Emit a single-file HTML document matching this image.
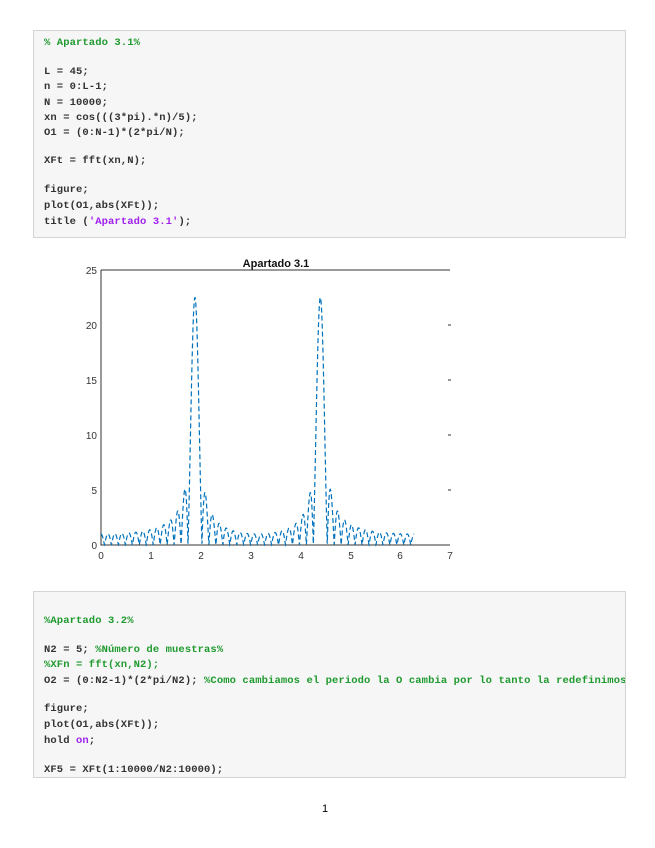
<!DOCTYPE html>
<html><head><meta charset="utf-8"><style>
body{margin:0;width:655px;height:848px;background:#fff;position:relative;overflow:hidden;font-family:"Liberation Mono",monospace}
.box{position:absolute;left:33px;width:591px;background:#f6f6f6;border:1px solid #d4d4d4;overflow:hidden}
.l{position:absolute;left:10px;font-size:10.5px;font-weight:bold;color:#333;white-space:pre;line-height:12px;letter-spacing:0.1px}
.c{color:#1f9a2e}.s{color:#a020f0}
.pn{position:absolute;left:322px;top:803px;font-family:"Liberation Sans",sans-serif;font-size:11px}
svg text{font-family:"Liberation Sans",sans-serif;font-size:10px;fill:#333}
</style></head><body>
<div class="box" style="top:30px;height:206px">
<div class="l c" style="top:6px">% Apartado 3.1%</div>
<div class="l" style="top:35px">L = 45;</div>
<div class="l" style="top:50px">n = 0:L-1;</div>
<div class="l" style="top:66px">N = 10000;</div>
<div class="l" style="top:81px">xn = cos(((3*pi).*n)/5);</div>
<div class="l" style="top:96px">O1 = (0:N-1)*(2*pi/N);</div>
<div class="l" style="top:124px">XFt = fft(xn,N);</div>
<div class="l" style="top:153px">figure;</div>
<div class="l" style="top:169px">plot(O1,abs(XFt));</div>
<div class="l" style="top:185px">title (<span class="s">'Apartado 3.1'</span>);</div>
</div>
<svg style="position:absolute;left:0;top:0" width="655" height="590">
<text x="276" y="267" text-anchor="middle" style="font-weight:bold;font-size:11px;fill:#111">Apartado 3.1</text>
<path d="M101 270H450M101 270V545H450" fill="none" stroke="#333" stroke-width="1"/>
<g stroke="#333"><path d="M448 325h3M448 380h3M448 435h3M448 490h3"/></g>
<g text-anchor="end"><text x="97" y="274">25</text><text x="97" y="329">20</text><text x="97" y="384">15</text><text x="97" y="439">10</text><text x="97" y="494">5</text><text x="97" y="549">0</text></g>
<g text-anchor="middle"><text x="101" y="559">0</text><text x="151" y="559">1</text><text x="201" y="559">2</text><text x="251" y="559">3</text><text x="301" y="559">4</text><text x="351" y="559">5</text><text x="400" y="559">6</text><text x="450" y="559">7</text></g>
<path id="cv" fill="none" stroke="#0072bd" stroke-width="1.2" stroke-dasharray="5 3"/>
</svg>
<div class="box" style="top:591px;height:185px">
<div class="l c" style="top:23px">%Apartado 3.2%</div>
<div class="l" style="top:52px">N2 = 5; <span class="c">%Número de muestras%</span></div>
<div class="l c" style="top:67px">%XFn = fft(xn,N2);</div>
<div class="l" style="top:83px">O2 = (0:N2-1)*(2*pi/N2); <span class="c">%Como cambiamos el periodo la O cambia por lo tanto la redefinimos</span></div>
<div class="l" style="top:111px">figure;</div>
<div class="l" style="top:127px">plot(O1,abs(XFt));</div>
<div class="l" style="top:143px">hold <span class="s">on</span>;</div>
<div class="l" style="top:172px">XF5 = XFt(1:10000/N2:10000);</div>
</div>
<div class="pn">1</div>
<script>
var d="",N=3000;
for(var k=0;k<N;k++){var w=2*Math.PI*k/N,re=0,im=0;
for(var n=0;n<45;n++){var x=Math.cos(3*Math.PI*n/5);re+=x*Math.cos(w*n);im-=x*Math.sin(w*n);}
var m=Math.sqrt(re*re+im*im);d+=(k?"L":"M")+(101+w*49.86).toFixed(2)+" "+(545-m*11).toFixed(2);}
document.getElementById("cv").setAttribute("d",d);
</script>
</body></html>
